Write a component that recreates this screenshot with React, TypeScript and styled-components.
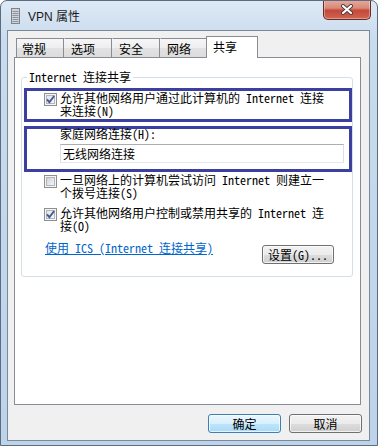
import styled, { createGlobalStyle } from 'styled-components';

const FONT = `"Noto Sans Mono CJK SC", "Noto Sans CJK SC", sans-serif`;

const GlobalStyle = createGlobalStyle`
  html, body { margin: 0; padding: 0; background: #fff; }
  body { font-family: ${FONT}; font-size: 12px; color: #000; }
  * { box-sizing: border-box; }
`;

const Window = styled.div`
  width: 378px;
  height: 446px;
  display: flex;
  flex-direction: column;
  border: 1px solid #5b6b80;
  border-radius: 7px 7px 0 0;
  background: linear-gradient(180deg, #dde9f5 0%, #c9dbee 40px, #bdd3ea 100%);
  overflow: hidden;
`;

const TitleBar = styled.div`
  height: 29px;
  display: flex;
  align-items: flex-start;
  flex-shrink: 0;
`;

const TitleGroup = styled.div`
  height: 29px;
  display: flex;
  align-items: center;
  gap: 8px;
  padding-left: 10px;
  flex: 1;
`;

const TitleText = styled.span`
  font-family: "Liberation Sans", "Noto Sans CJK SC", sans-serif;
  font-size: 12px;
  color: #1b1b1b;
`;

const CloseButton = styled.div`
  width: 48px;
  height: 20px;
  margin: -1px 6px 0 0;
  border: 1px solid #6a2a24;
  border-top: none;
  border-radius: 0 0 5px 5px;
  background: linear-gradient(180deg, #e8aa9c 0%, #d98a79 42%, #c5483a 55%, #cd6650 100%);
  box-shadow: inset 0 0 0 1px rgba(255, 255, 255, 0.35);
  display: flex;
  align-items: center;
  justify-content: center;
`;

const Client = styled.div`
  flex: 1;
  margin: 0 7px 4px 6px;
  border: 1px solid #7a8a9b;
  background: #f0f0f0;
  display: flex;
  flex-direction: column;
  padding: 5px 8px 0 6px;
`;

const TabStrip = styled.div`
  display: flex;
  align-items: flex-end;
  height: 22px;
  padding-left: 2px;
  margin-bottom: -1px;
  position: relative;
  z-index: 1;
`;

const Tab = styled.div<{ $selected?: boolean }>`
  width: ${(p) => (p.$selected ? 52 : 48)}px;
  height: ${(p) => (p.$selected ? 22 : 19)}px;
  margin-bottom: ${(p) => (p.$selected ? 0 : 1)}px;
  margin-left: ${(p) => (p.$selected ? -2 : 0)}px;
  border: 1px solid #898c95;
  border-bottom: none;
  border-left-color: ${(p) => (p.$selected ? '#898c95' : 'transparent')};
  &:first-child {
    border-left-color: #898c95;
    padding-left: 5px;
  }
  padding-left: 6px;
  padding-bottom: ${(p) => (p.$selected ? 2 : 0)}px;
  display: flex;
  align-items: center;
  position: relative;
  z-index: ${(p) => (p.$selected ? 2 : 1)};
  background: ${(p) =>
    p.$selected
      ? '#fff'
      : 'linear-gradient(180deg, #f6f6f6 0%, #eeeeee 50%, #e2e2e2 51%, #dcdcdc 100%)'};
`;

const Panel = styled.div`
  height: 348px;
  border: 1px solid #898c95;
  background: #fff;
  padding: 19px 7px 0 6px;
`;

const GroupBox = styled.div`
  position: relative;
  width: 332px;
  height: 200px;
  border: 1px solid #d5dfe5;
  border-radius: 3px;
  padding-top: 10px;
`;

const Legend = styled.span`
  position: absolute;
  top: -8px;
  left: 5px;
  padding: 0 2px;
  background: #fff;
  line-height: 13px;
  white-space: nowrap;
`;

const Highlight = styled.div<{ $h: number; $gap?: number }>`
  width: 328px;
  height: ${(p) => p.$h}px;
  margin: ${(p) => p.$gap ?? 0}px 0 0 2px;
  border: 3px solid #3b3f9f;
`;

const CheckRow = styled.div<{ $top?: number; $left?: number }>`
  display: flex;
  align-items: flex-start;
  gap: 3px;
  margin: ${(p) => p.$top ?? 0}px 0 0 ${(p) => p.$left ?? 0}px;
`;

const CheckIcon = styled.svg`
  flex-shrink: 0;
  margin-top: 2px;
`;

const Lines = styled.div`
  line-height: 13px;
  white-space: nowrap;
`;

const HomeBlock = styled.div`
  padding-left: 33px;
`;

const FieldLabel = styled.div`
  margin-top: -1px;
  line-height: 12px;
  white-space: nowrap;
`;

const TextBox = styled.div`
  margin-top: 4px;
  width: 284px;
  height: 19px;
  border: 1px solid #dbdfe6;
  border-top-color: #abadb3;
  border-bottom-color: #e3e9ef;
  background: #fff;
  padding-left: 2px;
  display: flex;
  align-items: center;
`;

const LinkRow = styled.div`
  display: flex;
  justify-content: space-between;
  align-items: flex-start;
  margin-top: 9px;
  padding: 0 18px 0 23px;
`;

const Link = styled.a`
  color: #0066cc;
  text-decoration: underline;
  line-height: 13px;
  white-space: nowrap;
  cursor: pointer;
`;

const Button = styled.div<{ $primary?: boolean; $w: number; $top?: number }>`
  width: ${(p) => p.$w}px;
  height: 19px;
  margin-top: ${(p) => p.$top ?? 0}px;
  border: 1px solid ${(p) => (p.$primary ? '#3c7fb1' : '#707070')};
  border-radius: 3px;
  background: ${(p) =>
    p.$primary
      ? 'linear-gradient(180deg, #eaf6fd 0%, #d9f0fc 50%, #bee6fd 51%, #a7d9f5 100%)'
      : 'linear-gradient(180deg, #f2f2f2 0%, #ebebeb 50%, #dddddd 51%, #cfcfcf 100%)'};
  box-shadow: inset 0 0 0 1px rgba(255, 255, 255, 0.7);
  display: flex;
  align-items: center;
  justify-content: center;
  white-space: nowrap;
  line-height: 12px;
`;

const ButtonRow = styled.div`
  display: flex;
  justify-content: flex-end;
  gap: 8px;
  margin: 9px -1px 0 0;
`;

const CheckBox = ({ checked }: { checked?: boolean }) => (
  <CheckIcon width="13" height="13" viewBox="0 0 13 13">
    <defs>
      <linearGradient id={checked ? 'cbOn' : 'cbOff'} x1="0" y1="0" x2="1" y2="1">
        <stop offset="0" stopColor={checked ? '#e2e5ea' : '#cbcfd5'} />
        <stop offset="1" stopColor="#f8f8f8" />
      </linearGradient>
    </defs>
    <rect x="0.5" y="0.5" width="12" height="12" fill="#f5f5f5" stroke="#8e8f8f" />
    <rect x="2.5" y="2.5" width="8" height="8" fill={`url(#${checked ? 'cbOn' : 'cbOff'})`} stroke="#b2b6bc" />
    {checked && (
      <path d="M3 6.3 L5.4 9.2 L10.2 3" fill="none" stroke="#465c92" strokeWidth="1.9" />
    )}
  </CheckIcon>
);

const TitleIcon = () => (
  <svg width="9" height="16" viewBox="0 0 9 16">
    <rect x="0.5" y="0.5" width="8" height="15" fill="#cfd4db" stroke="#7b838d" />
    {[3, 5, 7, 9, 11, 13].map((y) => (
      <line key={y} x1="1.5" y1={y + 0.5} x2="7.5" y2={y + 0.5} stroke="#8c949e" />
    ))}
  </svg>
);

const CloseGlyph = () => (
  <svg width="14" height="11" viewBox="0 0 14 11">
    <path d="M3 2 L11 9 M11 2 L3 9" stroke="#4a3a3a" strokeWidth="4" strokeLinecap="round" />
    <path d="M3 2 L11 9 M11 2 L3 9" stroke="#fff" strokeWidth="2.2" strokeLinecap="round" />
  </svg>
);

const tabs = ['常规', '选项', '安全', '网络', '共享'];

export default function App() {
  return (
    <>
      <GlobalStyle />
      <Window>
        <TitleBar>
          <TitleGroup>
            <TitleIcon />
            <TitleText>VPN 属性</TitleText>
          </TitleGroup>
          <CloseButton>
            <CloseGlyph />
          </CloseButton>
        </TitleBar>
        <Client>
          <TabStrip>
            {tabs.map((t) => (
              <Tab key={t} $selected={t === '共享'}>
                {t}
              </Tab>
            ))}
          </TabStrip>
          <Panel>
            <GroupBox>
              <Legend>Internet 连接共享</Legend>
              <Highlight $h={34}>
                <CheckRow $top={0} $left={17}>
                  <CheckBox checked />
                  <Lines>
                    允许其他网络用户通过此计算机的 Internet 连接
                    <br />
                    来连接(N)
                  </Lines>
                </CheckRow>
              </Highlight>
              <Highlight $h={46} $gap={4}>
                <HomeBlock>
                  <FieldLabel>家庭网络连接(H):</FieldLabel>
                  <TextBox>无线网络连接</TextBox>
                </HomeBlock>
              </Highlight>
              <CheckRow $top={1} $left={22}>
                <CheckBox />
                <Lines>
                  一旦网络上的计算机尝试访问 Internet 则建立一
                  <br />
                  个拨号连接(S)
                </Lines>
              </CheckRow>
              <CheckRow $top={7} $left={22}>
                <CheckBox checked />
                <Lines>
                  允许其他网络用户控制或禁用共享的 Internet 连
                  <br />
                  接(O)
                </Lines>
              </CheckRow>
              <LinkRow>
                <Link>使用 ICS (Internet 连接共享)</Link>
                <Button $w={72} $top={4}>设置(G)...</Button>
              </LinkRow>
            </GroupBox>
          </Panel>
          <ButtonRow>
            <Button $primary $w={73}>确定</Button>
            <Button $w={73}>取消</Button>
          </ButtonRow>
        </Client>
      </Window>
    </>
  );
}
